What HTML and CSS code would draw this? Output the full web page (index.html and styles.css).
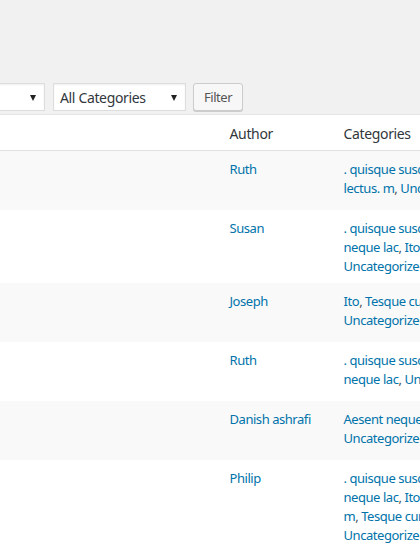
FILE: index.html
```html
<!DOCTYPE html>
<html>
<head>
    <meta charset="UTF-8">
    <title>Posts</title>
    <link rel="stylesheet" href="styles.css">
</head>
<body>
    <div class="wrap">
        <div class="tablenav">
            <div class="select select-dates">
                <span>All dates</span>
                <i class="arrow"></i>
            </div>
            <div class="select select-cats">
                <span>All Categories</span>
                <i class="arrow"></i>
            </div>
            <button class="button">Filter</button>
        </div>
        <table class="posts">
            <colgroup>
                <col class="col-title">
                <col class="col-author">
                <col class="col-cats">
            </colgroup>
            <thead>
                <tr>
                    <th></th>
                    <th>Author</th>
                    <th>Categories</th>
                </tr>
            </thead>
            <tbody>
                <tr class="alt">
                    <td><div class="title-cell"></div></td>
                    <td><a href="#">Ruth</a></td>
                    <td>
                        <span class="line"><a href="#">. quisque suscipit</a>,</span>
                        <span class="line"><a href="#">lectus. m</a>, <a href="#">Uncategorized</a></span>
                    </td>
                </tr>
                <tr>
                    <td><div class="title-cell"></div></td>
                    <td><a href="#">Susan</a></td>
                    <td>
                        <span class="line"><a href="#">. quisque suscipit</a>,</span>
                        <span class="line"><a href="#">neque lac</a>, <a href="#">Ito</a>,</span>
                        <span class="line"><a href="#">Uncategorized</a></span>
                    </td>
                </tr>
                <tr class="alt">
                    <td><div class="title-cell"></div></td>
                    <td><a href="#">Joseph</a></td>
                    <td>
                        <span class="line"><a href="#">Ito</a>, <a href="#">Tesque cursus</a>,</span>
                        <span class="line"><a href="#">Uncategorized</a></span>
                    </td>
                </tr>
                <tr>
                    <td><div class="title-cell"></div></td>
                    <td><a href="#">Ruth</a></td>
                    <td>
                        <span class="line"><a href="#">. quisque suscipit</a>,</span>
                        <span class="line"><a href="#">neque lac</a>, <a href="#">Uncategorized</a></span>
                    </td>
                </tr>
                <tr class="alt">
                    <td><div class="title-cell"></div></td>
                    <td><a href="#">Danish ashrafi</a></td>
                    <td>
                        <span class="line"><a href="#">Aesent neque</a>,</span>
                        <span class="line"><a href="#">Uncategorized</a></span>
                    </td>
                </tr>
                <tr>
                    <td><div class="title-cell"></div></td>
                    <td><a href="#">Philip</a></td>
                    <td>
                        <span class="line"><a href="#">. quisque suscipit</a>,</span>
                        <span class="line"><a href="#">neque lac</a>, <a href="#">Ito</a>, <a href="#">lectus.</a></span>
                        <span class="line"><a href="#">m</a>, <a href="#">Tesque cursus</a>,</span>
                        <span class="line"><a href="#">Uncategorized</a></span>
                    </td>
                </tr>
            </tbody>
        </table>
    </div>
</body>
</html>
```

FILE: styles.css
```css
body {
    margin: 0;
    background: #f1f1f1;
    color: #444;
    font-family: "Noto Sans", "Open Sans", sans-serif;
    font-size: 13px;
    letter-spacing: -0.45px;
    overflow: hidden;
}
.wrap {
    width: 700px;
}
.tablenav {
    display: flex;
    align-items: center;
    padding-top: 83px;
    height: 28px;
}
.select {
    box-sizing: border-box;
    height: 28px;
    display: flex;
    align-items: center;
    justify-content: space-between;
    background: #fff;
    border: 1px solid #ddd;
    box-shadow: inset 0 1px 2px rgba(0, 0, 0, 0.07);
    color: #32373c;
    font-size: 14px;
    letter-spacing: -0.35px;
    padding: 1px 8px 0 6px;
}
.select-dates {
    width: 145px;
    margin-left: -100px;
    margin-right: 8px;
}
.select-dates span {
    visibility: hidden;
}
.select-cats {
    width: 133px;
    margin-right: 7px;
}
.arrow {
    width: 0;
    height: 0;
    border-left: 3.5px solid transparent;
    border-right: 3.5px solid transparent;
    border-top: 6px solid #222;
}
.button {
    box-sizing: border-box;
    height: 28px;
    padding: 0 10px 1px;
    font-family: inherit;
    font-size: 13px;
    letter-spacing: inherit;
    color: #555;
    background: #f7f7f7;
    border: 1px solid #ccc;
    border-radius: 3px;
    box-shadow: 0 1px 0 #ccc;
}
.posts {
    margin: 3px 0 0 -1px;
    width: 640px;
    table-layout: fixed;
    border-collapse: collapse;
    background: #fff;
    border: 1px solid #e5e5e5;
}
.col-title {
    width: 220px;
}
.col-author {
    width: 114px;
}
.posts th {
    text-align: left;
    font-weight: normal;
    font-size: 14px;
    letter-spacing: -0.35px;
    color: #32373c;
    line-height: 19px;
    padding: 9px 10px 7px;
    border-bottom: 1px solid #e1e1e1;
}
.posts td {
    vertical-align: top;
    line-height: 19px;
    padding: 9px 10px 7px;
}
.posts tr.alt td {
    background: #f9f9f9;
}
.title-cell {
    height: 43px;
}
.line {
    display: block;
    white-space: nowrap;
    color: #555;
}
a {
    color: #0073aa;
    text-decoration: none;
}
```
